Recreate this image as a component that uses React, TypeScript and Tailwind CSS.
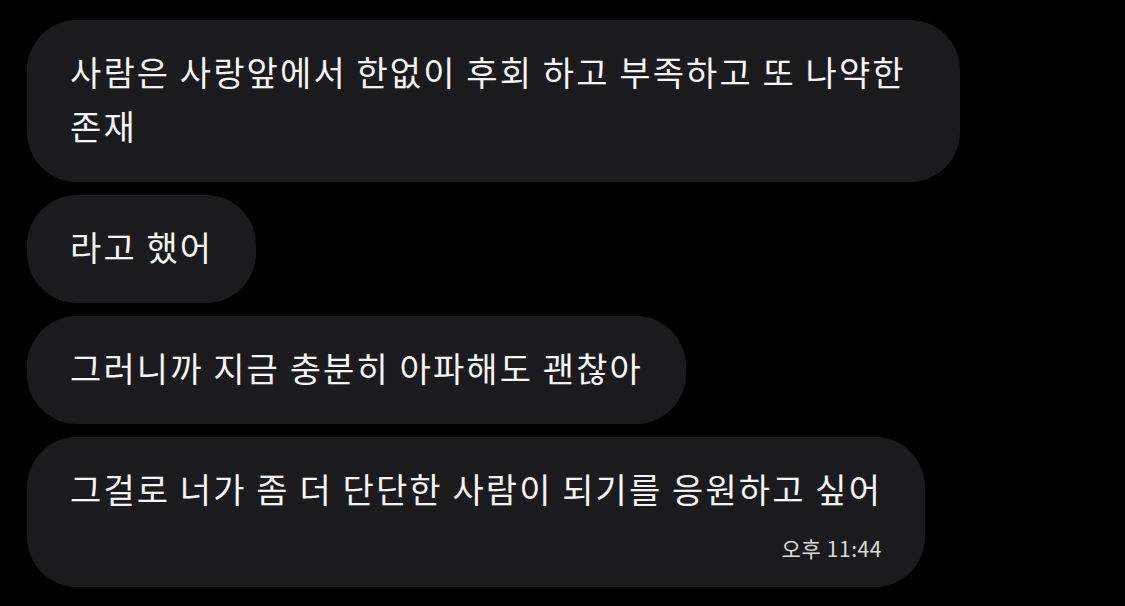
const font = { fontFamily: '"Noto Sans CJK KR", "Noto Sans", sans-serif' };

function Bubble({ text, time }: { text: string; time?: string }) {
  return (
    <div className="w-fit max-w-[933px] rounded-[50px] bg-[#1b1b1d] pl-[43px] pr-[43px] pt-[25px] pb-[29px]">
      <p className="text-[34px] leading-[54px] tracking-[2.1px] text-[#f4f4f4]">{text}</p>
      {time && (
        <div className="mt-[20px] -mb-[2px] text-right text-[21px] leading-[24px] tracking-[0.6px] text-[#dcdcdc]">{time}</div>
      )}
    </div>
  );
}

export default function App() {
  return (
    <div className="min-h-[606px] w-[1125px] bg-black pt-[20px] pl-[27px]" style={font}>
      <div className="flex flex-col gap-[13px]">
        <Bubble text="사람은 사랑앞에서 한없이 후회 하고 부족하고 또 나약한 존재" />
        <Bubble text="라고 했어" />
        <Bubble text="그러니까 지금 충분히 아파해도 괜찮아" />
        <Bubble text="그걸로 너가 좀 더 단단한 사람이 되기를 응원하고 싶어" time="오후 11:44" />
      </div>
    </div>
  );
}
